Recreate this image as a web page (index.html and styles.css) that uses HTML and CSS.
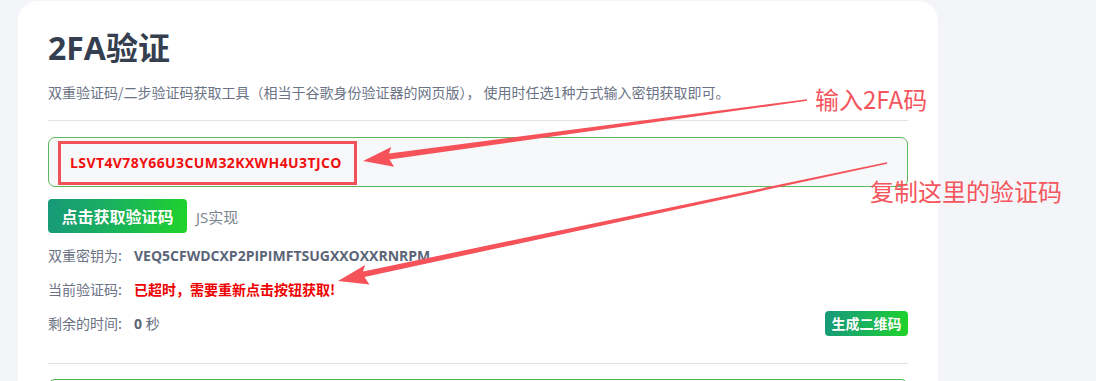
FILE: index.html
```html
<!DOCTYPE html>
<html lang="zh-CN">
<head>
<meta charset="utf-8">
<title>2FA验证</title>
<link rel="stylesheet" href="styles.css">
</head>
<body>
<div class="page">
  <main class="card">
    <h1 class="title">2FA验证</h1>
    <p class="desc">双重验证码/二步验证码获取工具（相当于谷歌身份验证器的网页版）， 使用时任选1种方式输入密钥获取即可。</p>
    <hr class="divider">
    <div class="input-box">
      <span class="code-input">LSVT4V78Y66U3CUM32KXWH4U3TJCO</span>
    </div>
    <div class="actions">
      <button class="btn btn-main">点击获取验证码</button>
      <span class="hint">JS实现</span>
    </div>
    <div class="row">
      <span class="label">双重密钥为:</span>
      <span class="value">VEQ5CFWDCXP2PIPIMFTSUGXXOXXRNRPM</span>
    </div>
    <div class="row">
      <span class="label">当前验证码:</span>
      <span class="value value-red">已超时，需要重新点击按钮获取!</span>
    </div>
    <div class="row row-last">
      <span class="label">剩余的时间:</span>
      <span class="value">0 <span class="unit">秒</span></span>
      <button class="btn btn-small">生成二维码</button>
    </div>
    <hr class="divider divider-bottom">
    <div class="next-box"></div>
  </main>
</div>

<svg class="overlay" width="1096" height="381" viewBox="0 0 1096 381" xmlns="http://www.w3.org/2000/svg">
  <rect x="59.5" y="142.5" width="296" height="41" fill="none" stroke="#f0525a" stroke-width="3"/>
  <polygon fill="#f5525a" points="363,161 394.1,166.8 389.5,159.5 807.1,100.8 806.9,99.2 389,153.5 391.3,147"/>
  <polygon fill="#f5525a" points="338,281 369.4,284.5 364.5,277 887.2,163.7 886.8,162.3 363,271.5 365.2,264.9"/>
</svg>
<span class="note note-1">输入2FA码</span>
<span class="note note-2">复制这里的验证码</span>
</body>
</html>
```
FILE: styles.css
```css
html, body {
  margin: 0;
  padding: 0;
}
body {
  background: #f4f5f9;
  width: 1096px;
  height: 381px;
  overflow: hidden;
  position: relative;
  font-family: "Open Sans", "Noto Sans CJK SC", sans-serif;
}
.page {
  padding: 1px 0 0 18px;
}
.card {
  width: 920px;
  box-sizing: border-box;
  background: #fff;
  border-radius: 20px 20px 0 0;
  padding: 27px 30px 0 30px;
  height: 380px;
  overflow: hidden;
}
.title {
  margin: 0;
  font-size: 32px;
  line-height: 40px;
  font-weight: 700;
  color: #363f4f;
  font-family: "Open Sans", "Noto Sans CJK SC", sans-serif;
}
.desc {
  margin: 14px 0 0 0;
  font-size: 14px;
  line-height: 20px;
  color: #6b7385;
  font-family: "Noto Sans CJK SC", sans-serif;
}
.divider {
  border: 0;
  border-top: 1px solid #e4e4e6;
  margin: 18px 0 0 0;
}
.input-box {
  margin-top: 16px;
  height: 50px;
  box-sizing: border-box;
  border: 1px solid #5cb85c;
  border-radius: 7px;
  background: #f7f8fa;
  display: flex;
  align-items: center;
  padding-left: 21px;
}
.code-input {
  color: #f01010;
  font-weight: 700;
  font-size: 14px;
  letter-spacing: 0.4px;
}
.actions {
  margin-top: 12px;
  display: flex;
  align-items: center;
  gap: 9px;
}
.btn {
  border: 0;
  color: #fff;
  font-family: "Noto Sans CJK SC", sans-serif;
  font-weight: 700;
  background: linear-gradient(100deg, #17997a 0%, #19b45a 50%, #20d42a 100%);
  cursor: pointer;
  padding: 0;
  text-shadow: 0 0 1px rgba(0, 0, 0, 0.15);
}
.btn-main {
  width: 139px;
  height: 34px;
  border-radius: 4px;
  font-size: 16px;
}
.hint {
  font-size: 15px;
  color: #7b8290;
  font-family: "Open Sans", "Noto Sans CJK SC", sans-serif;
}
.row {
  display: flex;
  align-items: center;
  height: 34px;
}
.actions + .row {
  margin-top: 5px;
}
.label {
  width: 86px;
  font-size: 14px;
  color: #6b7385;
  font-family: "Noto Sans CJK SC", sans-serif;
}
.value {
  font-size: 14px;
  font-weight: 700;
  color: #5b6577;
}
.value-red {
  color: #ee0000;
  font-family: "Noto Sans CJK SC", sans-serif;
}
.unit {
  font-weight: 400;
  font-family: "Noto Sans CJK SC", sans-serif;
}
.row-last .btn-small {
  margin-left: auto;
}
.btn-small {
  width: 83px;
  height: 25px;
  border-radius: 4px;
  font-size: 14px;
}
.divider-bottom {
  margin-top: 23px;
}
.next-box {
  margin-top: 15px;
  height: 40px;
  border: 1px solid #4cb850;
  border-radius: 7px;
}
.overlay {
  position: absolute;
  left: 0;
  top: 0;
  pointer-events: none;
}
.note {
  position: absolute;
  color: #f5555d;
  font-family: "Noto Sans CJK SC", sans-serif;
  font-size: 24px;
  line-height: 26px;
  font-weight: 400;
  white-space: nowrap;
}
.note-1 {
  left: 815px;
  top: 86px;
}
.note-2 {
  left: 870px;
  top: 178px;
}
```
